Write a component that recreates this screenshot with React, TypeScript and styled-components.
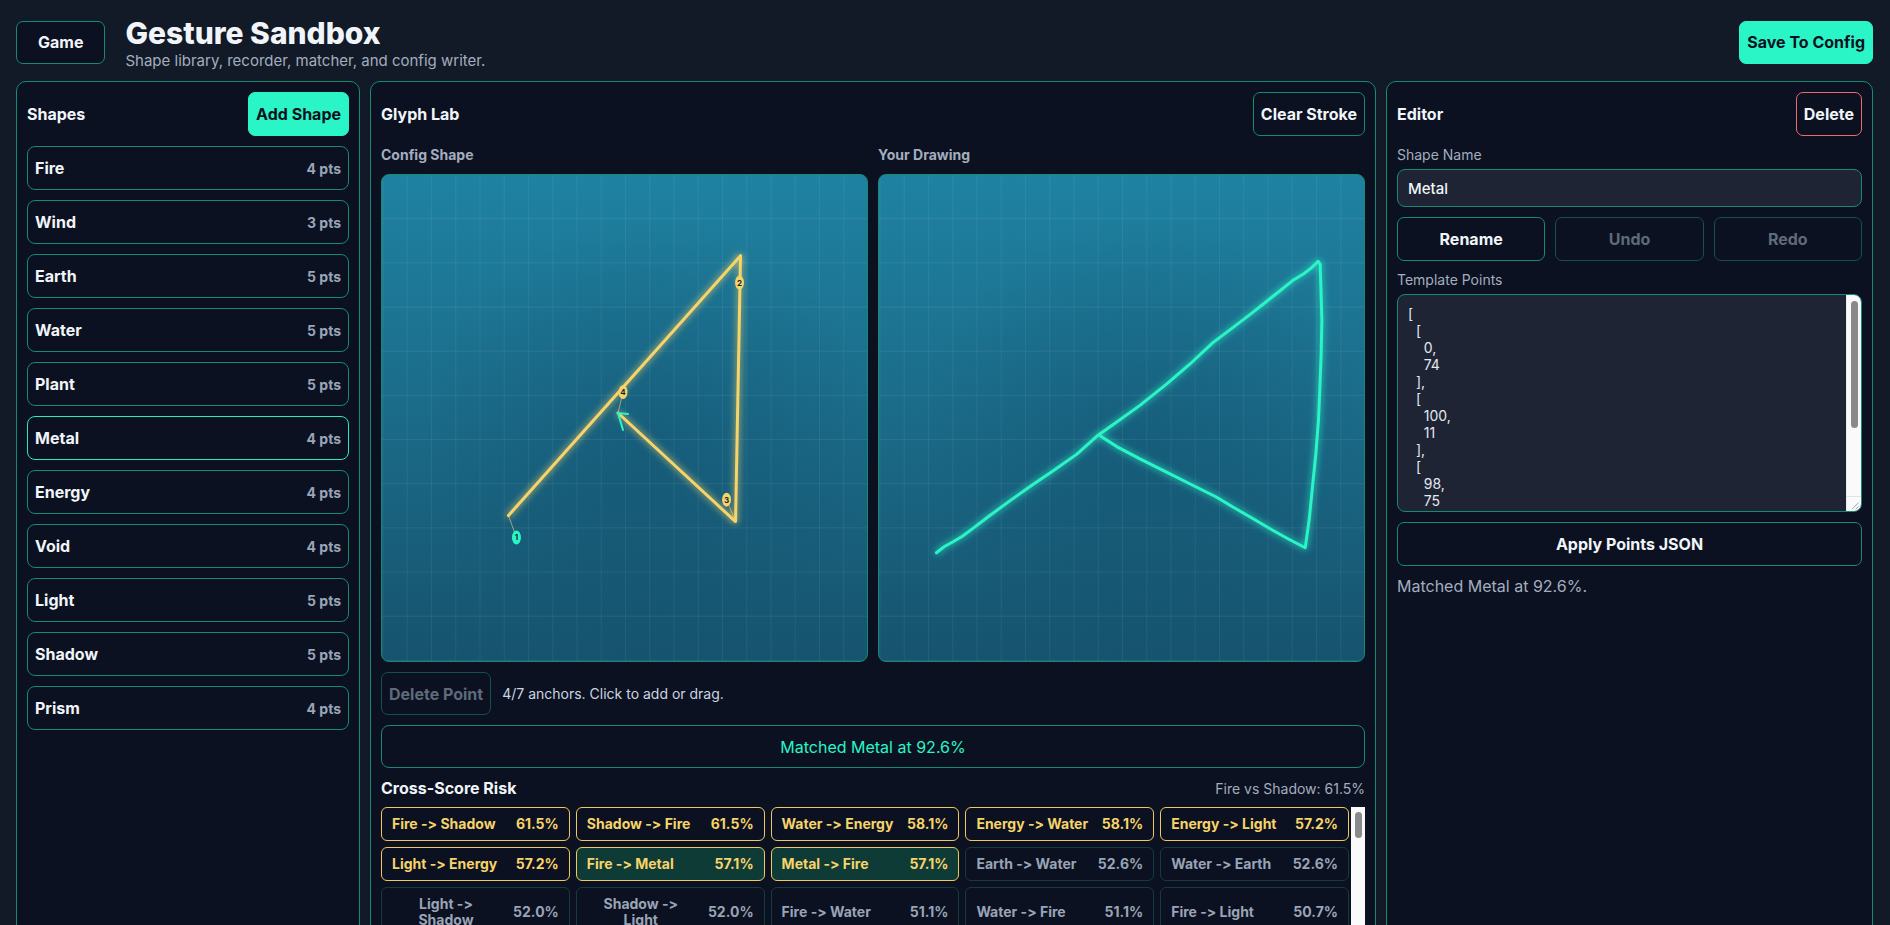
import React from 'react';
import styled, { createGlobalStyle, css } from 'styled-components';

const GlobalStyle = createGlobalStyle`
  html, body {
    margin: 0;
    padding: 0;
    overflow: hidden;
    background: #131a27;
  }
  body {
    font-family: Inter, "Noto Sans", sans-serif;
    font-feature-settings: "calt" 0, "liga" 0;
    color: #f1f5f9;
  }
  * { box-sizing: border-box; }
  button, input, textarea { font-feature-settings: "calt" 0, "liga" 0; }
`;

const TEAL = '#178a74';
const MINT = '#2af5c6';
const YELLOW = '#f7d46a';

type Shape = { name: string; pts: number };

const shapes: Shape[] = [
  { name: 'Fire', pts: 4 },
  { name: 'Wind', pts: 3 },
  { name: 'Earth', pts: 5 },
  { name: 'Water', pts: 5 },
  { name: 'Plant', pts: 5 },
  { name: 'Metal', pts: 4 },
  { name: 'Energy', pts: 4 },
  { name: 'Void', pts: 4 },
  { name: 'Light', pts: 5 },
  { name: 'Shadow', pts: 5 },
  { name: 'Prism', pts: 4 },
];

const selected = 'Metal';

type Pair = { a: string; b: string; score: number; stacked?: boolean };

const pairs: Pair[] = [
  { a: 'Fire', b: 'Shadow', score: 61.5 },
  { a: 'Shadow', b: 'Fire', score: 61.5 },
  { a: 'Water', b: 'Energy', score: 58.1 },
  { a: 'Energy', b: 'Water', score: 58.1 },
  { a: 'Energy', b: 'Light', score: 57.2 },
  { a: 'Light', b: 'Energy', score: 57.2 },
  { a: 'Fire', b: 'Metal', score: 57.1 },
  { a: 'Metal', b: 'Fire', score: 57.1 },
  { a: 'Earth', b: 'Water', score: 52.6 },
  { a: 'Water', b: 'Earth', score: 52.6 },
  { a: 'Light', b: 'Shadow', score: 52.0, stacked: true },
  { a: 'Shadow', b: 'Light', score: 52.0, stacked: true },
  { a: 'Fire', b: 'Water', score: 51.1 },
  { a: 'Water', b: 'Fire', score: 51.1 },
  { a: 'Fire', b: 'Light', score: 50.7 },
  { a: 'Light', b: 'Fire', score: 50.7 },
  { a: 'Plant', b: 'Wind', score: 49.8 },
  { a: 'Wind', b: 'Plant', score: 49.8 },
  { a: 'Void', b: 'Prism', score: 48.9 },
  { a: 'Prism', b: 'Void', score: 48.9 },
];

const templatePoints = [
  [0, 74],
  [100, 11],
  [98, 75],
  [47, 49],
];

// config preview, canvas coords
const configPts: [number, number][] = [
  [127, 342],
  [360, 81],
  [355, 348],
  [237, 239],
];
const markers: [number, number][] = [
  [135, 364],
  [359, 108],
  [346, 326],
  [242, 218],
];

// freehand stroke, traced
const rawStroke = [
  [107, 1000], [130, 982], [160, 965], [185, 950], [215, 928], [265, 890], [330, 842],
  [400, 793], [460, 752], [530, 703], [595, 645], [650, 606], [720, 556], [800, 492],
  [870, 432], [940, 367], [1000, 322], [1060, 276], [1090, 252], [1140, 212], [1180, 180],
  [1210, 162], [1235, 143], [1257, 122], [1263, 132], [1265, 200], [1268, 300], [1266, 400],
  [1262, 500], [1258, 600], [1250, 700], [1240, 800], [1230, 900], [1218, 985], [1170, 960],
  [1120, 932], [1060, 897], [1000, 862], [950, 832], [870, 792], [800, 757], [720, 717],
  [650, 680], [596, 645],
];
const strokePts = rawStroke.map(([x, y]) => `${(22 + x / 3).toFixed(1)},${(46 + y / 3).toFixed(1)}`).join(' ');

const Page = styled.div`
  display: flex;
  flex-direction: column;
  gap: 11px;
  padding: 14px 17px 0 16px;
  min-height: 100vh;
`;

const Header = styled.header`
  display: flex;
  align-items: center;
  gap: 20px;
`;

const TitleBlock = styled.div`
  display: flex;
  flex-direction: column;
  flex: 1;
`;

const Title = styled.h1`
  margin: 0;
  font-size: 30px;
  line-height: 38px;
  font-weight: 800;
  color: #f1f5f9;
`;

const Subtitle = styled.div`
  font-size: 15px;
  line-height: 18px;
  color: #a3adbf;
`;

const Button = styled.button<{ $variant?: 'primary' | 'ghost' | 'danger'; $wide?: boolean; $h?: number }>`
  height: ${(p) => p.$h ?? 44}px;
  padding: 0 ${(p) => (p.$wide ? 21 : 7)}px;
  border-radius: 7px;
  font-family: inherit;
  font-size: 16px;
  font-weight: 700;
  white-space: nowrap;
  cursor: pointer;
  background: #0b1120;
  color: #f1f5f9;
  border: 1px solid ${TEAL};
  ${(p) =>
    p.$variant === 'primary' &&
    css`
      background: ${MINT};
      border-color: ${MINT};
      color: #0b1120;
    `}
  ${(p) =>
    p.$variant === 'danger' &&
    css`
      border-color: #ef6b6b;
    `}
  &:disabled {
    color: #5f6a7b;
    border-color: #15514a;
    cursor: default;
  }
`;

const Main = styled.main`
  flex: 1;
  display: grid;
  grid-template-columns: 344px 1fr 487px;
  column-gap: 10px;
`;

const Panel = styled.section`
  display: flex;
  flex-direction: column;
  gap: 10px;
  padding: 10px;
  background: #0b1120;
  border: 1px solid ${TEAL};
  border-radius: 10px;

  & > * {
    flex-shrink: 0;
  }
`;

const PanelHead = styled.div`
  display: flex;
  align-items: center;
  justify-content: space-between;
  min-height: 44px;
`;

const PanelTitle = styled.h2`
  margin: 0;
  font-size: 16px;
  font-weight: 700;
  color: #f1f5f9;
`;

const ShapeList = styled.div`
  display: flex;
  flex-direction: column;
  gap: 10px;
`;

const ShapeItem = styled.button<{ $active?: boolean }>`
  display: flex;
  align-items: center;
  justify-content: space-between;
  height: 44px;
  padding: 0 7px;
  background: #0b1120;
  border: 1px solid ${(p) => (p.$active ? '#2ee6c2' : TEAL)};
  border-radius: 8px;
  font-family: inherit;
  cursor: pointer;
`;

const ShapeName = styled.span`
  font-size: 16px;
  font-weight: 700;
  color: #f1f5f9;
`;

const ShapePts = styled.span`
  font-size: 14px;
  font-weight: 700;
  color: #9aa5b8;
`;

const CanvasGrid = styled.div`
  display: grid;
  grid-template-columns: 1fr 1fr;
  gap: 10px;
`;

const CanvasCol = styled.div`
  display: flex;
  flex-direction: column;
  gap: 10px;
`;

const CanvasLabel = styled.div`
  font-size: 14px;
  line-height: 18px;
  font-weight: 700;
  color: #a3adbf;
`;

const CanvasFrame = styled.div`
  aspect-ratio: 487 / 488;
  border: 1px solid ${TEAL};
  border-radius: 8px;
  overflow: hidden;
  background-image: linear-gradient(to right, rgba(255, 255, 255, 0.06) 1px, transparent 1px),
    linear-gradient(to bottom, rgba(255, 255, 255, 0.07) 1px, transparent 1px),
    radial-gradient(circle at 55% 55%, rgba(10, 60, 90, 0.25), transparent 60%),
    linear-gradient(#1f82a2, #16536e);
  background-size: 5% 100%, 100% calc(100% / 11), 100% 100%, 100% 100%;
  background-position: 0.5px 0, 0 -1px, 0 0, 0 0;

  svg {
    display: block;
    width: 100%;
    height: 100%;
  }
`;

const ToolRow = styled.div`
  display: flex;
  align-items: center;
  gap: 11px;
`;

const Hint = styled.span`
  font-size: 14px;
  color: #cbd5e1;
`;

const MatchBanner = styled.div`
  height: 43px;
  display: flex;
  align-items: center;
  justify-content: center;
  border: 1px solid ${TEAL};
  border-radius: 8px;
  font-size: 16px;
  color: ${MINT};
`;

const RiskHead = styled.div`
  display: flex;
  align-items: center;
  justify-content: space-between;
  height: 20px;
  margin-bottom: -1px;
`;

const RiskTitle = styled.h3`
  margin: 0;
  font-size: 16px;
  font-weight: 700;
  color: #f1f5f9;
`;

const RiskMeta = styled.span`
  font-size: 14px;
  color: #a3adbf;
`;

const RiskWrap = styled.div`
  display: flex;
  gap: 2px;
  height: 160px;
`;

const RiskScroll = styled.div`
  flex: 1;
  overflow: hidden;
  display: grid;
  grid-template-columns: repeat(5, 1fr);
  align-content: start;
  gap: 6px;
`;

const ScrollTrack = styled.div<{ $w: number }>`
  position: relative;
  flex: 0 0 ${(p) => p.$w}px;
  width: ${(p) => p.$w}px;
  background: #fafafa;
`;

const ScrollThumb = styled.div<{ $top: number; $len: number }>`
  position: absolute;
  left: 50%;
  top: ${(p) => p.$top}px;
  width: 7px;
  height: ${(p) => p.$len}px;
  margin-left: -3.5px;
  border-radius: 4px;
  background: #8a8a8a;
`;

const RiskCard = styled.button<{ $hot: boolean; $focus: boolean }>`
  display: flex;
  align-items: center;
  justify-content: space-between;
  gap: 8px;
  padding: 8px 10px;
  border-radius: 6px;
  font-family: inherit;
  font-size: 14px;
  line-height: 16px;
  font-weight: 700;
  text-align: center;
  white-space: nowrap;
  background: ${(p) => (p.$focus ? '#0f3b37' : '#0b1120')};
  border: 1px solid ${(p) => (p.$hot ? '#f0c95c' : '#163b3c')};
  color: ${(p) => (p.$hot ? YELLOW : '#9aa4b6')};
`;

const RiskLabel = styled.span<{ $stacked?: boolean }>`
  ${(p) =>
    p.$stacked &&
    css`
      white-space: normal;
      flex: 1;
      max-width: 108px;
    `}
`;

const Field = styled.div`
  display: flex;
  flex-direction: column;
  gap: 5px;
`;

const FieldLabel = styled.label`
  font-size: 14px;
  line-height: 18px;
  color: #a3adbf;
`;

const TextInput = styled.input`
  height: 38px;
  padding: 0 10px;
  background: #1e2433;
  border: 1px solid ${TEAL};
  border-radius: 8px;
  font-family: inherit;
  font-size: 15px;
  font-weight: 500;
  color: #f1f5f9;
  outline: none;
`;

const ButtonRow = styled.div`
  display: grid;
  grid-template-columns: repeat(3, 1fr);
  gap: 10px;
`;

const PointsBox = styled.div`
  position: relative;
  height: 218px;
  border: 1px solid ${TEAL};
  border-radius: 8px;
  overflow: hidden;
  background: #1e2433;
`;

const PointsArea = styled.textarea`
  display: block;
  width: 100%;
  height: 100%;
  padding: 10px 25px 10px 10px;
  background: transparent;
  border: 0;
  font-family: inherit;
  font-size: 14px;
  line-height: 17px;
  color: #e2e8f0;
  outline: none;
  resize: none;
  overflow: hidden;
`;

const AreaTrack = styled.div`
  position: absolute;
  top: 0;
  right: 0;
  bottom: 0;
  width: 15px;
  background: #fafafa;
  border-left: 1px solid #ececec;
`;

const Grip = styled.svg`
  position: absolute;
  right: 0;
  bottom: 0;
  width: 15px;
  height: 15px;
  border-top: 1px solid #e2e2e2;
`;

const Status = styled.div`
  font-size: 16px;
  line-height: 20px;
  color: #a3adbf;
`;

const Glow = ({ id }: { id: string }) => (
  <filter id={id} x="-20%" y="-20%" width="140%" height="140%">
    <feGaussianBlur stdDeviation="4" result="blur" />
    <feMerge>
      <feMergeNode in="blur" />
      <feMergeNode in="SourceGraphic" />
    </feMerge>
  </filter>
);

const ConfigPreview = () => {
  const line = configPts.map((p) => p.join(',')).join(' ');
  return (
    <svg viewBox="0 0 487 488">
      <defs>
        <Glow id="glowY" />
      </defs>
      <polyline points={line} fill="none" stroke={YELLOW} strokeWidth={3} strokeLinejoin="round" strokeLinecap="round" filter="url(#glowY)" />
      {configPts.map(([x, y], i) => (
        <line key={i} x1={x} y1={y} x2={markers[i][0]} y2={markers[i][1]} stroke={YELLOW} strokeWidth={1} opacity={0.6} />
      ))}
      <polyline points="247,240 237,239 242,256" fill="none" stroke={MINT} strokeWidth={2} strokeLinecap="round" />
      {markers.map(([x, y], i) => (
        <g key={i}>
          <ellipse cx={x} cy={y} rx={4.5} ry={7} fill={i === 0 ? MINT : YELLOW} />
          <text x={x} y={y + 3} fontSize={8} fontWeight={700} textAnchor="middle" fill="#1b2430" fontFamily="Inter, sans-serif">
            {i + 1}
          </text>
        </g>
      ))}
    </svg>
  );
};

const DrawingPreview = () => (
  <svg viewBox="0 0 487 488">
    <defs>
      <Glow id="glowM" />
    </defs>
    <polyline points={strokePts} fill="none" stroke={MINT} strokeWidth={3} strokeLinejoin="round" strokeLinecap="round" filter="url(#glowM)" />
  </svg>
);

export default function App() {
  return (
    <>
      <GlobalStyle />
      <Page>
        <Header>
          <Button $wide $h={43}>Game</Button>
          <TitleBlock>
            <Title>Gesture Sandbox</Title>
            <Subtitle>Shape library, recorder, matcher, and config writer.</Subtitle>
          </TitleBlock>
          <Button $variant="primary" $h={43}>Save To Config</Button>
        </Header>

        <Main>
          <Panel>
            <PanelHead>
              <PanelTitle>Shapes</PanelTitle>
              <Button $variant="primary">Add Shape</Button>
            </PanelHead>
            <ShapeList>
              {shapes.map((s) => (
                <ShapeItem key={s.name} $active={s.name === selected}>
                  <ShapeName>{s.name}</ShapeName>
                  <ShapePts>{s.pts} pts</ShapePts>
                </ShapeItem>
              ))}
            </ShapeList>
          </Panel>

          <Panel>
            <PanelHead>
              <PanelTitle>Glyph Lab</PanelTitle>
              <Button>Clear Stroke</Button>
            </PanelHead>
            <CanvasGrid>
              <CanvasCol>
                <CanvasLabel>Config Shape</CanvasLabel>
                <CanvasFrame>
                  <ConfigPreview />
                </CanvasFrame>
              </CanvasCol>
              <CanvasCol>
                <CanvasLabel>Your Drawing</CanvasLabel>
                <CanvasFrame>
                  <DrawingPreview />
                </CanvasFrame>
              </CanvasCol>
            </CanvasGrid>
            <ToolRow>
              <Button disabled $h={43}>Delete Point</Button>
              <Hint>4/7 anchors. Click to add or drag.</Hint>
            </ToolRow>
            <MatchBanner>Matched Metal at 92.6%</MatchBanner>
            <RiskHead>
              <RiskTitle>Cross-Score Risk</RiskTitle>
              <RiskMeta>Fire vs Shadow: 61.5%</RiskMeta>
            </RiskHead>
            <RiskWrap>
              <RiskScroll>
                {pairs.map((p) => (
                  <RiskCard
                    key={p.a + p.b}
                    $hot={p.score >= 55}
                    $focus={p.score >= 55 && (p.a === selected || p.b === selected)}
                  >
                    <RiskLabel $stacked={p.stacked}>
                      {p.a} -&gt; {p.b}
                    </RiskLabel>
                    <span>{p.score.toFixed(1)}%</span>
                  </RiskCard>
                ))}
              </RiskScroll>
              <ScrollTrack $w={14}>
                <ScrollThumb $top={5} $len={26} />
              </ScrollTrack>
            </RiskWrap>
          </Panel>

          <Panel>
            <PanelHead>
              <PanelTitle>Editor</PanelTitle>
              <Button $variant="danger">Delete</Button>
            </PanelHead>
            <Field>
              <FieldLabel>Shape Name</FieldLabel>
              <TextInput defaultValue="Metal" />
            </Field>
            <ButtonRow>
              <Button>Rename</Button>
              <Button disabled>Undo</Button>
              <Button disabled>Redo</Button>
            </ButtonRow>
            <Field>
              <FieldLabel>Template Points</FieldLabel>
              <PointsBox>
                <PointsArea defaultValue={JSON.stringify(templatePoints, null, 2)} spellCheck={false} />
                <AreaTrack>
                  <ScrollThumb $top={6} $len={127} />
                </AreaTrack>
                <Grip viewBox="0 0 15 15">
                  <path d="M13 6 L6 13 M13 10 L10 13" stroke="#9a9a9a" strokeWidth={1} />
                </Grip>
              </PointsBox>
            </Field>
            <Button>Apply Points JSON</Button>
            <Status>Matched Metal at 92.6%.</Status>
          </Panel>
        </Main>
      </Page>
    </>
  );
}
